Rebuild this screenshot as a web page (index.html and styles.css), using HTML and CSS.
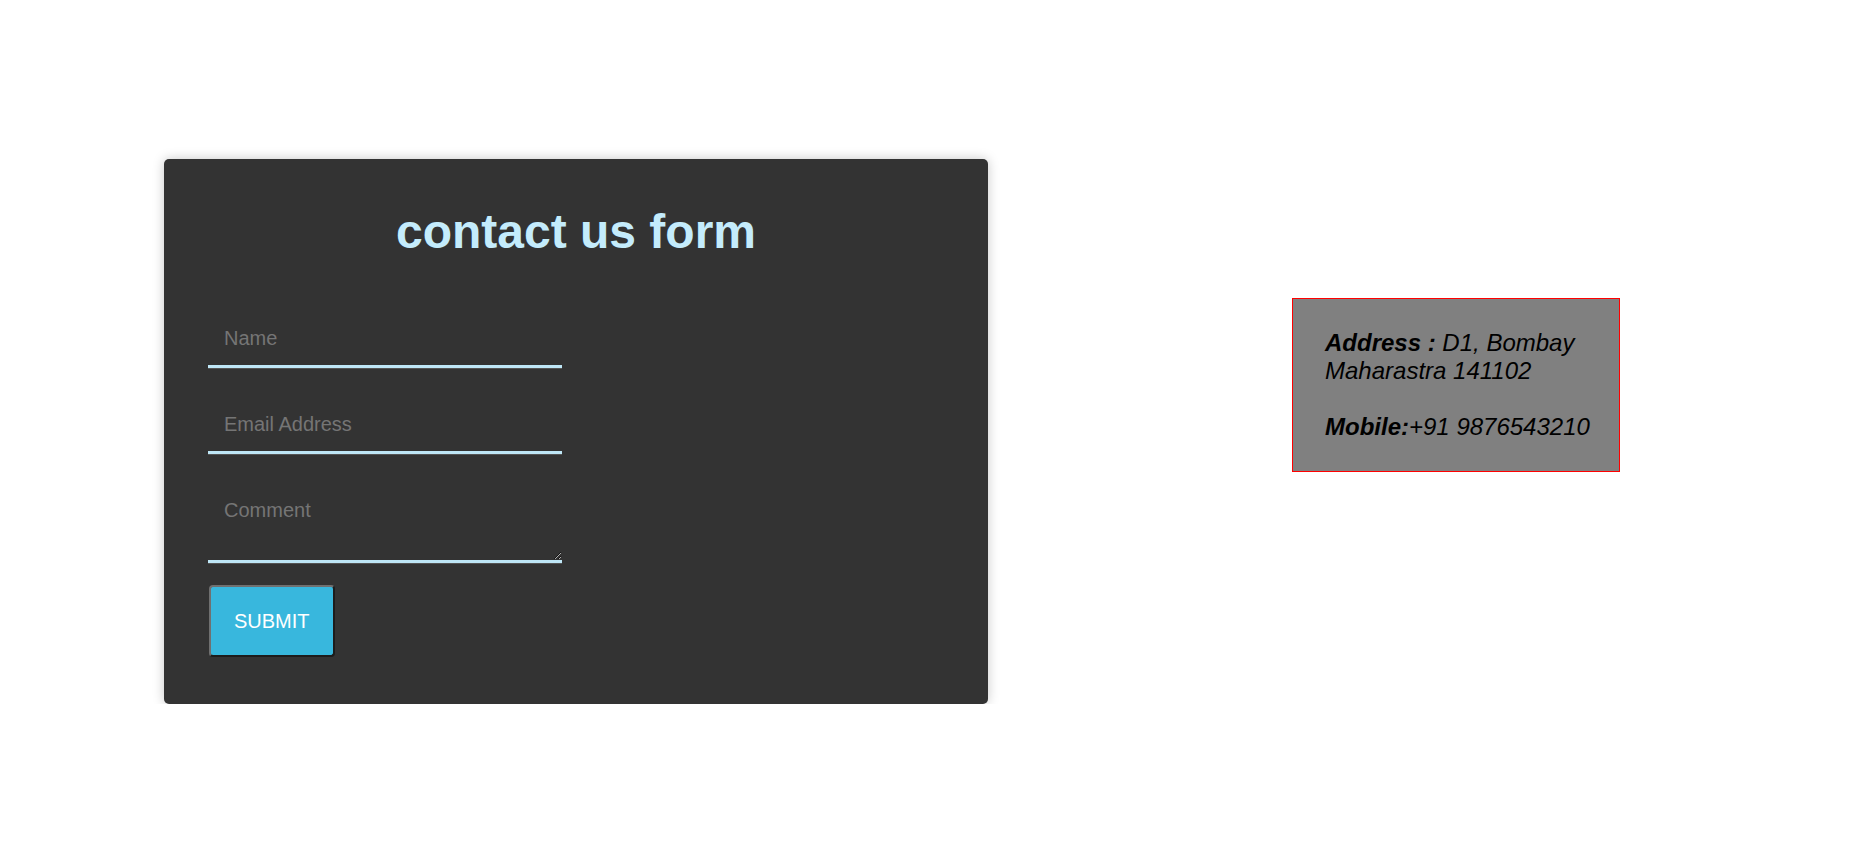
FILE: index.html
```html
<!DOCTYPE html>
<html lang="en">
<head>
<meta charset="utf-8">
<title>Contact us</title>
<link rel="stylesheet" href="styles.css">
</head>
<body>
<div class="page">
  <div class="card">
    <h1 class="title">contact us form</h1>
    <form class="form">
      <input class="field" type="text" placeholder="Name">
      <input class="field" type="email" placeholder="Email Address">
      <textarea class="field area" rows="2" placeholder="Comment"></textarea>
      <button class="submit" type="button">SUBMIT</button>
    </form>
  </div>
  <div class="info">
    <p class="info-text"><b>Address :</b> D1, Bombay Maharastra 141102<br><br><b>Mobile:</b>+91 9876543210</p>
  </div>
</div>
</body>
</html>
```

FILE: styles.css
```css
html, body {
  margin: 0;
  padding: 0;
  background: #ffffff;
}

body {
  font-family: "Liberation Sans", Arial, sans-serif;
}

.page {
  display: flex;
  align-items: flex-start;
  gap: 304px;
  padding: 159px 0 0 164px;
}

.card {
  width: 824px;
  box-sizing: border-box;
  background: #333333;
  border-radius: 5px;
  box-shadow: 0 0 12px rgba(0, 0, 0, 0.22);
  padding: 45px 44px 47px;
}

.title {
  margin: 0;
  font-size: 48px;
  line-height: 55px;
  font-weight: bold;
  text-align: center;
  color: #c4ecfc;
}

.form {
  margin: 53px 0 0;
  display: flex;
  flex-direction: column;
  align-items: flex-start;
}

.field {
  display: block;
  width: 354px;
  box-sizing: border-box;
  margin: 0 0 30px;
  padding: 15px 15px 15px 16px;
  border: 0;
  border-bottom: 3px solid #bfe7f7;
  box-shadow: 0 1px 0 #555;
  background: transparent;
  font-family: "Liberation Sans", Arial, sans-serif;
  font-size: 20px;
  line-height: 23px;
  color: #dddddd;
  outline: none;
}

.field::placeholder {
  color: #757575;
}

.area {
  height: 79px;
  margin-bottom: 22px;
}

.submit {
  display: block;
  box-sizing: border-box;
  margin-left: 1px;
  padding: 23px 23px 22px;
  border: 2px solid;
  border-color: #707070 #1c1c1c #1c1c1c #707070;
  border-radius: 4px;
  background: #38b7dd;
  color: #ffffff;
  font-family: "Liberation Sans", Arial, sans-serif;
  font-size: 20px;
  line-height: 23px;
}

.info {
  margin-top: 139px;
  width: 266px;
  padding: 30px 28px 30px 32px;
  border: 1px solid #ff0000;
  background: #808080;
}

.info-text {
  margin: 0;
  font-size: 24px;
  font-style: italic;
  color: #000000;
}
```
